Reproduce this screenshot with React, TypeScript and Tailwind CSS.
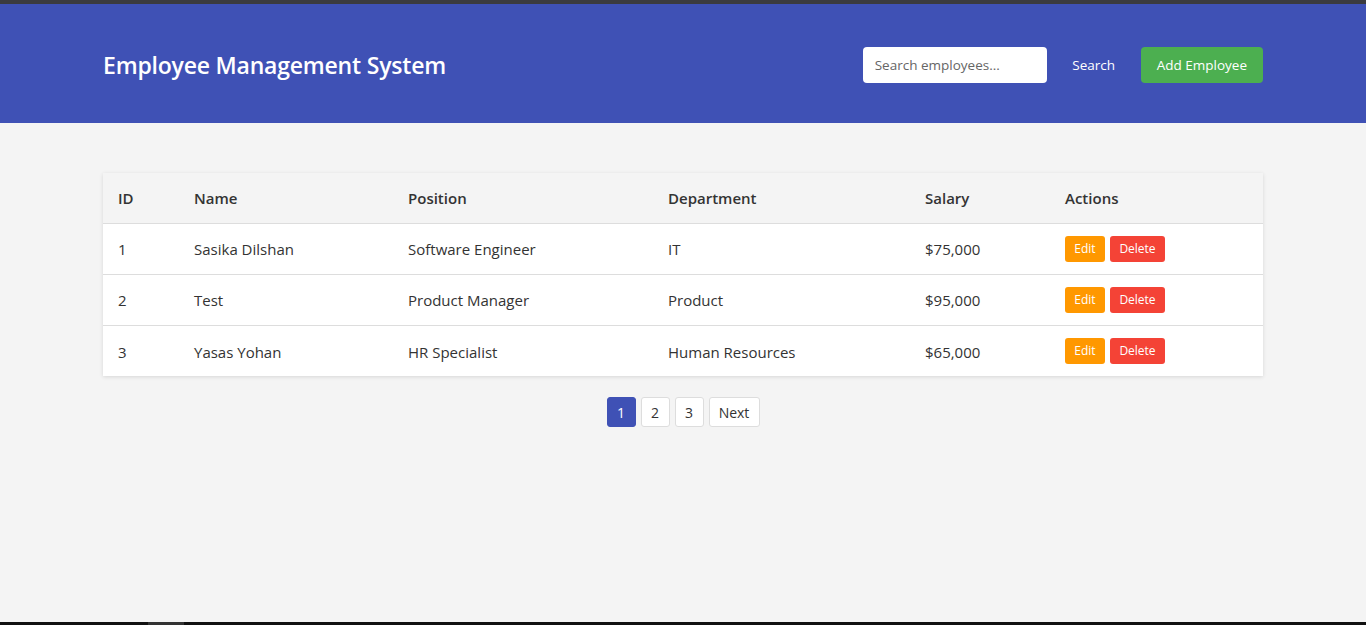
import { useState } from 'react'

type Employee = {
  id: number
  name: string
  position: string
  department: string
  salary: string
}

const employees: Employee[] = [
  { id: 1, name: 'Sasika Dilshan', position: 'Software Engineer', department: 'IT', salary: '$75,000' },
  { id: 2, name: 'Test', position: 'Product Manager', department: 'Product', salary: '$95,000' },
  { id: 3, name: 'Yasas Yohan', position: 'HR Specialist', department: 'Human Resources', salary: '$65,000' },
]

const font = { fontFamily: '"Open Sans", "Noto Sans", sans-serif' }

export default function App() {
  const [page, setPage] = useState(1)
  const [query, setQuery] = useState('')

  return (
    <div className="h-screen flex flex-col bg-[#f4f4f4] text-[#333]" style={font}>
      {/* window chrome strip */}
      <div className="h-[4px] bg-[#3b3b3f] shrink-0" />

      {/* Header */}
      <header className="h-[119px] shrink-0 bg-[#3f51b5] text-white">
        <div className="max-w-[1200px] mx-auto px-5 pt-[3px] h-full flex items-center justify-between">
          <h1 className="text-[23px] font-semibold tracking-[-0.2px]">Employee Management System</h1>
          <div className="flex items-center">
            <input
              value={query}
              onChange={(e) => setQuery(e.target.value)}
              placeholder="Search employees..."
              className="w-[184px] h-[36px] rounded-[4px] bg-white px-3 text-[13.5px] text-[#333] placeholder:text-[#666] outline-none"
            />
            <button className="ml-[10px] w-[74px] h-[36px] text-[13.5px] text-white">Search</button>
            <button className="ml-[10px] px-4 h-[36px] rounded-[4px] bg-[#4caf50] text-[13.5px] text-white">
              Add Employee
            </button>
          </div>
        </div>
      </header>

      {/* Main */}
      <main className="flex-1">
        <div className="max-w-[1200px] mx-auto px-5 pt-[50px]">
          <table className="w-full bg-white border-collapse shadow-[0_1px_4px_rgba(0,0,0,0.12)] text-[15px]">
            <thead>
              <tr className="bg-[#f4f4f4] h-[50px] text-left border-b border-[#ddd]">
                <th className="pl-[15px] w-[76px] font-semibold">ID</th>
                <th className="pl-[15px] w-[214px] font-semibold">Name</th>
                <th className="pl-[15px] w-[260px] font-semibold">Position</th>
                <th className="pl-[15px] w-[257px] font-semibold">Department</th>
                <th className="pl-[15px] w-[140px] font-semibold">Salary</th>
                <th className="pl-[15px] font-semibold">Actions</th>
              </tr>
            </thead>
            <tbody>
              {employees.map((emp, i) => (
                <tr
                  key={emp.id}
                  className={`h-[51px] ${i < employees.length - 1 ? 'border-b border-[#ddd]' : ''}`}
                >
                  <td className="pl-[15px] pt-[2px]">{emp.id}</td>
                  <td className="pl-[15px] pt-[2px]">{emp.name}</td>
                  <td className="pl-[15px] pt-[2px]">{emp.position}</td>
                  <td className="pl-[15px] pt-[2px]">{emp.department}</td>
                  <td className="pl-[15px] pt-[2px]">{emp.salary}</td>
                  <td className="pl-[15px]">
                    <div className="flex gap-[5px]">
                      <button className="w-[40px] h-[26px] rounded-[3px] bg-[#ff9800] text-white text-[12px]">Edit</button>
                      <button className="w-[55px] h-[26px] rounded-[3px] bg-[#f44336] text-white text-[12px]">Delete</button>
                    </div>
                  </td>
                </tr>
              ))}
            </tbody>
          </table>

          {/* Pagination */}
          <div className="flex justify-center gap-[5px] mt-[21px] text-[14px]">
            {[1, 2, 3].map((n) => (
              <button
                key={n}
                onClick={() => setPage(n)}
                className={`w-[29px] h-[30px] rounded-[3px] border ${
                  page === n ? 'bg-[#3f51b5] border-[#3f51b5] text-white' : 'bg-white border-[#ddd] text-[#333]'
                }`}
              >
                {n}
              </button>
            ))}
            <button
              onClick={() => setPage(Math.min(3, page + 1))}
              className="w-[51px] h-[30px] rounded-[3px] border border-[#ddd] bg-white text-[#333]"
            >
              Next
            </button>
          </div>
        </div>
      </main>

      {/* bottom strip */}
      <div className="h-[3px] shrink-0 bg-[#111] flex">
        <div className="ml-[148px] w-[36px] bg-[#333]" />
      </div>
    </div>
  )
}
